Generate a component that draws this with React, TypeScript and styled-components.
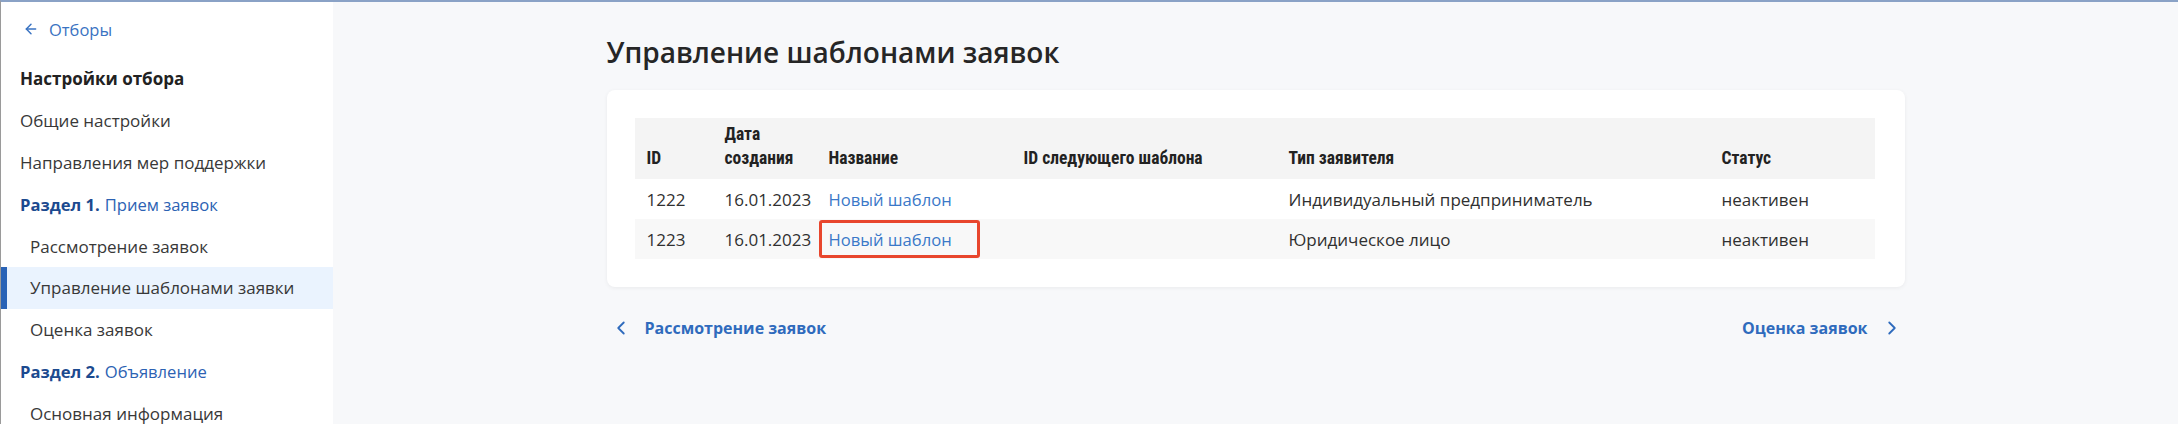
import React from "react";
import styled, { createGlobalStyle } from "styled-components";
import { ArrowLeft, ChevronLeft, ChevronRight } from "lucide-react";

const Global = createGlobalStyle`
  * { box-sizing: border-box; }
  html, body { margin: 0; padding: 0; }
  body {
    font-family: "Open Sans", "Noto Sans", Arial, sans-serif;
    background: #f7f8fa;
    color: #2b2b2b;
  }
`;

const Page = styled.div`
  width: 2178px;
  height: 424px;
  overflow: hidden;
  display: flex;
  border-top: 2px solid #8aa2c6;
  border-left: 1px solid #9a9a9a;
  background: #f7f8fa;
`;

const Sidebar = styled.aside`
  width: 332px;
  flex-shrink: 0;
  background: #ffffff;
  padding-top: 15px;
  display: flex;
  flex-direction: column;
`;

const BackLink = styled.a`
  flex-shrink: 0;
  display: flex;
  align-items: center;
  gap: 10px;
  height: 24px;
  padding-left: 22px;
  margin-bottom: 17px;
  color: #3a73c2;
  font-size: 16.5px;
  text-decoration: none;
`;

const NavItem = styled.div<{ $level: "head" | "section" | "top" | "sub"; $active?: boolean }>`
  flex-shrink: 0;
  height: 41.8px;
  display: flex;
  align-items: center;
  font-size: ${(p) => (p.$level === "section" ? "16.6px" : "17px")};
  font-weight: ${(p) => (p.$level === "head" ? 700 : 400)};
  color: ${(p) => (p.$level === "section" ? "#2c62b3" : p.$level === "head" ? "#222" : "#383838")};
  background: ${(p) => (p.$active ? "#eaf3fe" : "transparent")};
  border-left: 6px solid ${(p) => (p.$active ? "#2a63b6" : "transparent")};
  padding-left: ${(p) => (p.$level === "sub" ? "23px" : "13px")};
  white-space: nowrap;
`;

const SectionNum = styled.b`
  color: #1c4a8f;
  font-weight: 700;
  margin-right: 5px;
`;

const Main = styled.main`
  flex: 1;
  display: flex;
  justify-content: center;
  padding-top: 32px;
`;

const Content = styled.div`
  width: 1298px;
  display: flex;
  flex-direction: column;
`;

const Title = styled.h1`
  margin: 0 0 20px 0;
  font-size: 28px;
  line-height: 36px;
  font-weight: 600;
  color: #262626;
`;

const Card = styled.section`
  background: #fff;
  border-radius: 8px;
  box-shadow: 0 1px 4px rgba(0, 0, 0, 0.06);
  padding: 28px 30px 28px 28px;
`;

const Table = styled.table`
  width: 100%;
  border-collapse: collapse;
  table-layout: fixed;
`;

const HeadRow = styled.tr`
  background: #f4f4f4;
  height: 61px;
`;

const Th = styled.th`
  text-align: left;
  vertical-align: bottom;
  padding: 0 12px 9px 12px;
  font-family: "Liberation Sans Narrow", "Roboto Condensed", "Liberation Sans", sans-serif;
  font-stretch: condensed;
  font-size: 17.5px;
  line-height: 24px;
  font-weight: 700;
  color: #222;
  white-space: nowrap;
`;

const Row = styled.tr<{ $striped?: boolean }>`
  height: 40px;
  background: ${(p) => (p.$striped ? "#f8f8f8" : "#fff")};
`;

const Td = styled.td`
  padding: 0 12px;
  font-size: 17px;
  color: #303030;
  white-space: nowrap;
  vertical-align: middle;
`;

const LinkText = styled.a<{ $marked?: boolean }>`
  display: inline-flex;
  align-items: center;
  color: #3a78c8;
  font-size: 16.6px;
  text-decoration: none;
  ${(p) =>
    p.$marked
      ? `border: 3px solid #e8462d;
         border-radius: 3px;
         height: 38px;
         padding: 0 25px 0 7px;
         margin-left: -10px;`
      : ""}
`;

const Pager = styled.nav`
  display: flex;
  justify-content: space-between;
  align-items: center;
  margin-top: 28px;
  padding: 0 2px 0 3px;
  height: 26px;
`;

const PagerLink = styled.a`
  display: flex;
  align-items: center;
  gap: 13px;
  color: #2f6bbd;
  font-size: 16px;
  font-weight: 700;
  text-decoration: none;
`;

const rows = [
  { id: "1222", date: "16.01.2023", name: "Новый шаблон", type: "Индивидуальный предприниматель", status: "неактивен" },
  { id: "1223", date: "16.01.2023", name: "Новый шаблон", type: "Юридическое лицо", status: "неактивен", marked: true },
];

export default function App() {
  return (
    <>
      <Global />
      <Page>
        <Sidebar>
          <BackLink href="#">
            <ArrowLeft size={16} strokeWidth={2.2} />
            Отборы
          </BackLink>
          <NavItem $level="head">Настройки отбора</NavItem>
          <NavItem $level="top">Общие настройки</NavItem>
          <NavItem $level="top">Направления мер поддержки</NavItem>
          <NavItem $level="section">
            <SectionNum>Раздел 1.</SectionNum>Прием заявок
          </NavItem>
          <NavItem $level="sub">Рассмотрение заявок</NavItem>
          <NavItem $level="sub" $active>
            Управление шаблонами заявки
          </NavItem>
          <NavItem $level="sub">Оценка заявок</NavItem>
          <NavItem $level="section">
            <SectionNum>Раздел 2.</SectionNum>Объявление
          </NavItem>
          <NavItem $level="sub">Основная информация</NavItem>
        </Sidebar>
        <Main>
          <Content>
            <Title>Управление шаблонами заявок</Title>
            <Card>
              <Table>
                <colgroup>
                  <col style={{ width: 78 }} />
                  <col style={{ width: 104 }} />
                  <col style={{ width: 195 }} />
                  <col style={{ width: 265 }} />
                  <col style={{ width: 433 }} />
                  <col />
                </colgroup>
                <thead>
                  <HeadRow>
                    <Th>ID</Th>
                    <Th>
                      Дата
                      <br />
                      создания
                    </Th>
                    <Th>Название</Th>
                    <Th>ID следующего шаблона</Th>
                    <Th>Тип заявителя</Th>
                    <Th>Статус</Th>
                  </HeadRow>
                </thead>
                <tbody>
                  {rows.map((r, i) => (
                    <Row key={r.id} $striped={i % 2 === 1}>
                      <Td>{r.id}</Td>
                      <Td>{r.date}</Td>
                      <Td>
                        <LinkText href="#" $marked={r.marked}>
                          {r.name}
                        </LinkText>
                      </Td>
                      <Td />
                      <Td>{r.type}</Td>
                      <Td>{r.status}</Td>
                    </Row>
                  ))}
                </tbody>
              </Table>
            </Card>
            <Pager>
              <PagerLink href="#">
                <ChevronLeft size={22} strokeWidth={2} />
                Рассмотрение заявок
              </PagerLink>
              <PagerLink href="#">
                Оценка заявок
                <ChevronRight size={22} strokeWidth={2} />
              </PagerLink>
            </Pager>
          </Content>
        </Main>
      </Page>
    </>
  );
}
